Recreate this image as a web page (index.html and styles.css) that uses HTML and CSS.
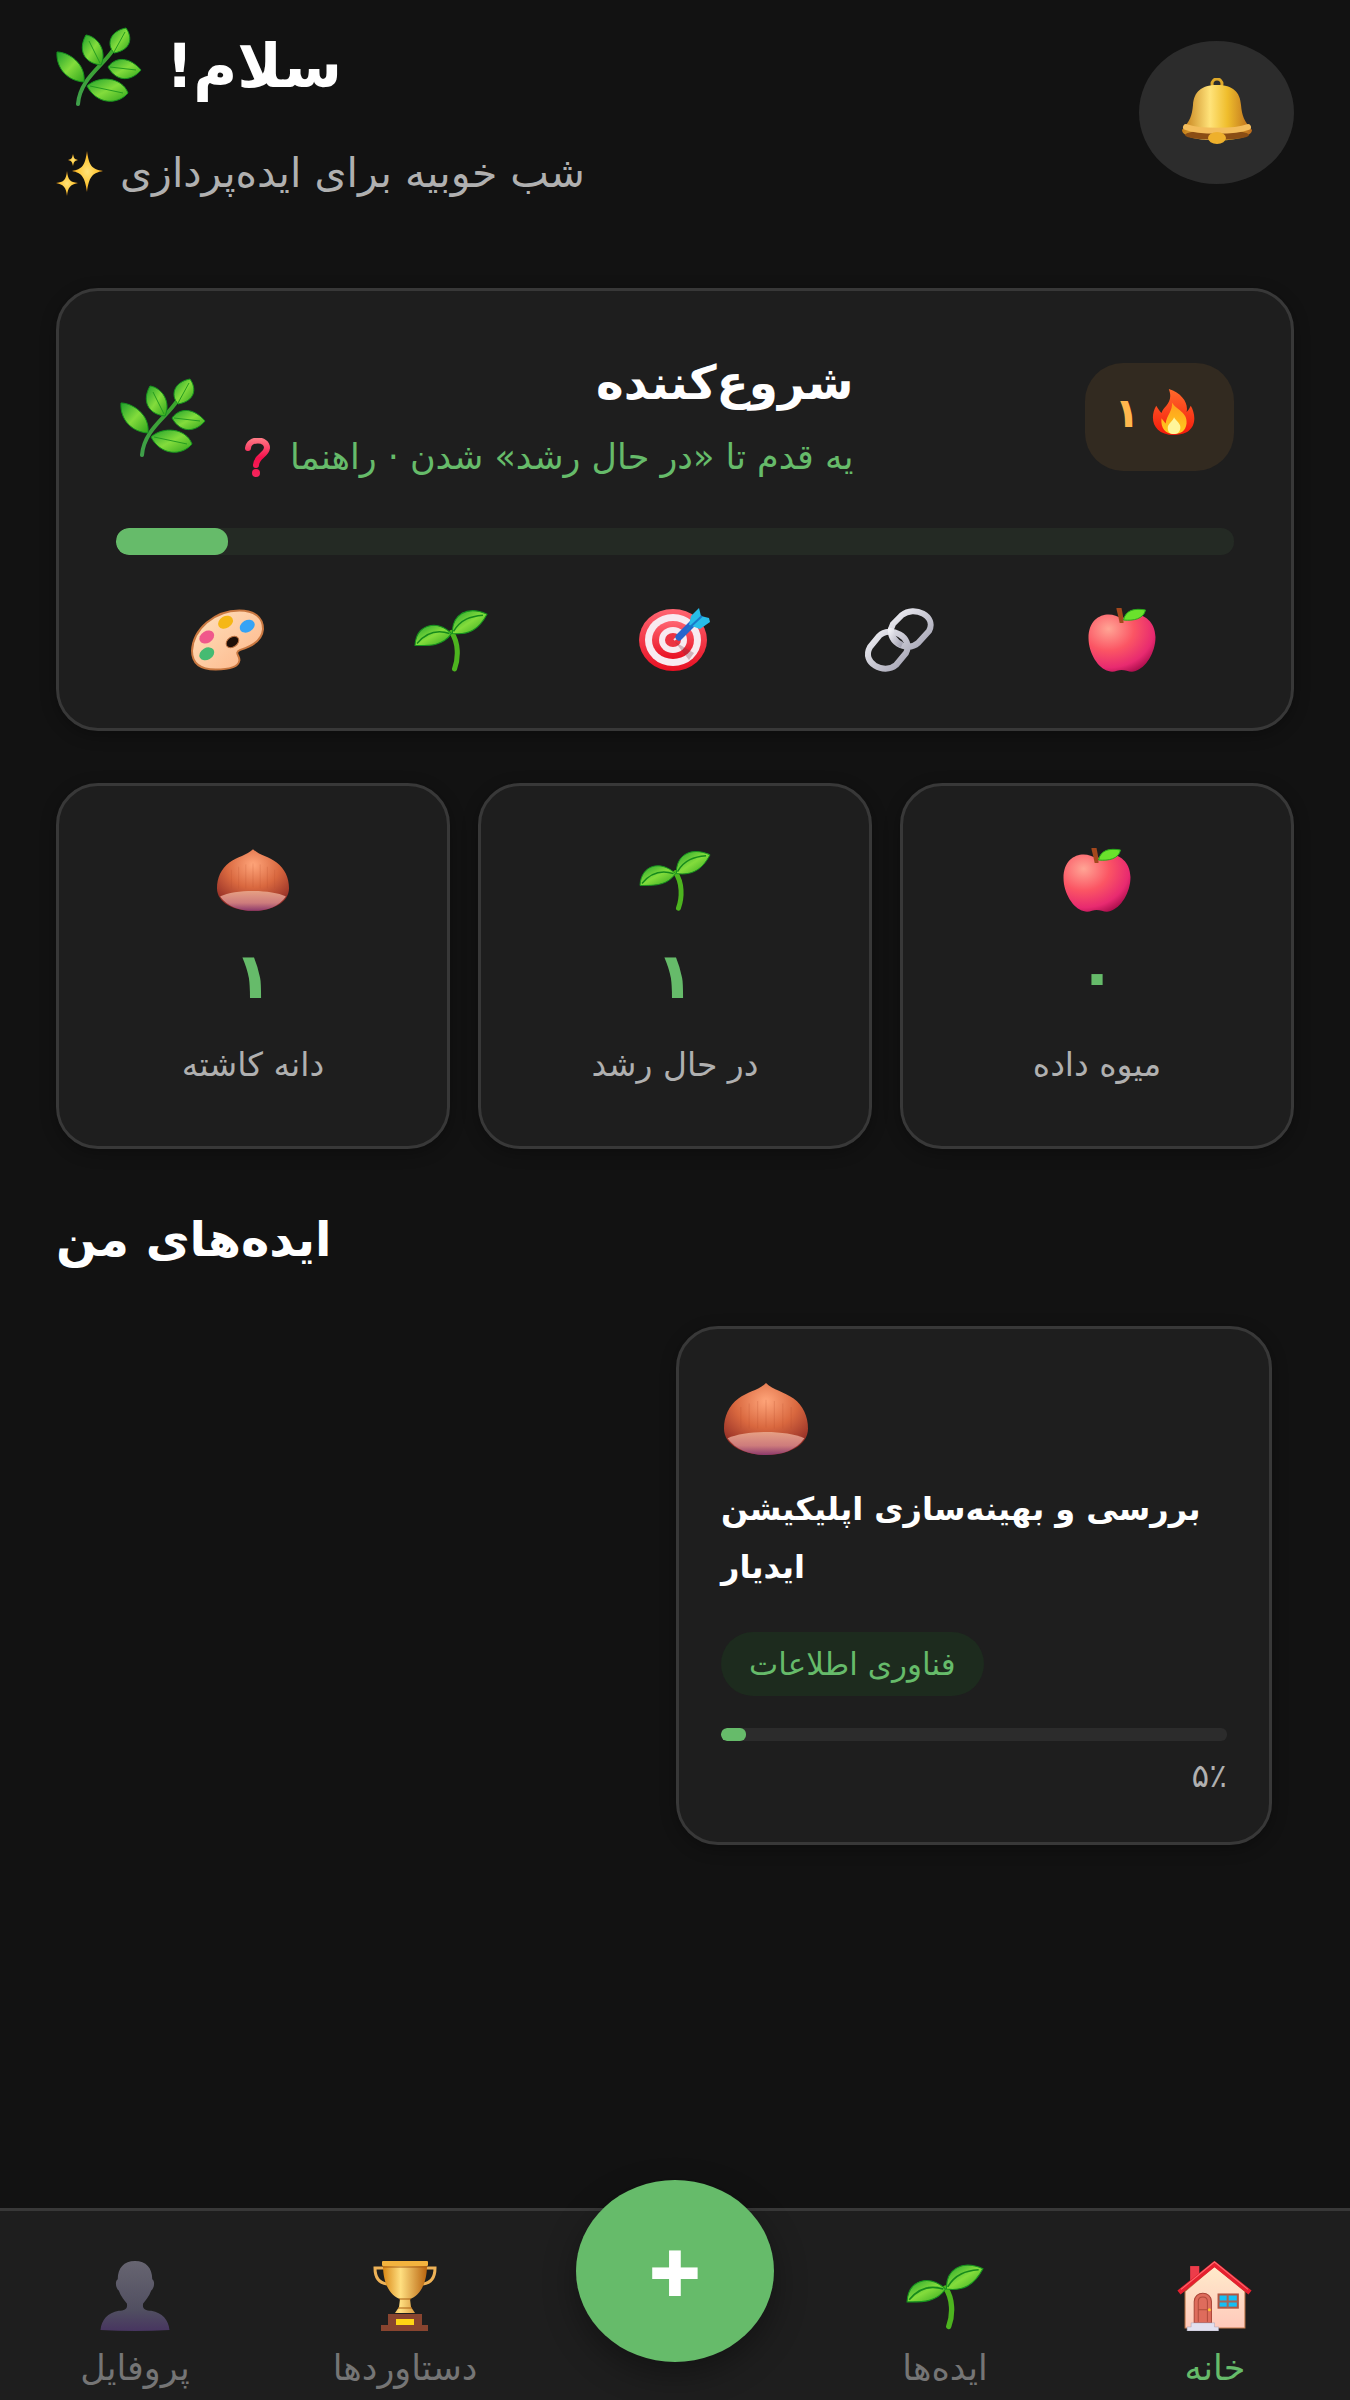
FILE: index.html
```
<!DOCTYPE html>
<html lang="fa">
<head>
  <meta charset="UTF-8" />
  <meta name="viewport" content="width=device-width, initial-scale=1.0"/>
  <title>ایدیار</title>
  <link rel="stylesheet" href="styles.css">
</head>
<body>
  <!-- shared icons -->
  <svg class="sprite" aria-hidden="true">
    <defs>
      <linearGradient id="leaf" x1="0" y1="0" x2="1" y2="1">
        <stop offset="0" stop-color="#1fa02c"/><stop offset=".5" stop-color="#83dc3c"/><stop offset="1" stop-color="#2fa51c"/>
      </linearGradient>
      <linearGradient id="stem" x1="0" y1="0" x2="0" y2="1">
        <stop offset="0" stop-color="#3aa52b"/><stop offset="1" stop-color="#3f9f4a"/>
      </linearGradient>
      <radialGradient id="apple" cx=".3" cy=".25" r=".85">
        <stop offset="0" stop-color="#ffa595"/><stop offset=".45" stop-color="#fb5564"/><stop offset=".8" stop-color="#e82a70"/><stop offset="1" stop-color="#a80c4b"/>
      </radialGradient>
      <radialGradient id="nut" cx=".5" cy=".25" r=".75">
        <stop offset="0" stop-color="#ffa57a"/><stop offset=".5" stop-color="#d9683f"/><stop offset="1" stop-color="#8e2924"/>
      </radialGradient>
      <linearGradient id="nut-base" x1="0" y1="0" x2="0" y2="1">
        <stop offset="0" stop-color="#e6a084"/><stop offset=".6" stop-color="#cd7b7c"/><stop offset="1" stop-color="#8c3a6c"/>
      </linearGradient>
      <linearGradient id="gold" x1="0" y1="0" x2="1" y2="0">
        <stop offset="0" stop-color="#c27a14"/><stop offset=".4" stop-color="#ffe37a"/><stop offset=".65" stop-color="#efbd2c"/><stop offset="1" stop-color="#b8681c"/>
      </linearGradient>
      <linearGradient id="cup" x1="0" y1="0" x2="1" y2="0">
        <stop offset="0" stop-color="#d98715"/><stop offset=".4" stop-color="#ffdf80"/><stop offset="1" stop-color="#b9640f"/>
      </linearGradient>
      <radialGradient id="spark">
        <stop offset="0" stop-color="#ffe27a"/><stop offset=".6" stop-color="#ffc93a"/><stop offset="1" stop-color="#f29a12"/>
      </radialGradient>
      <linearGradient id="flame" x1="0" y1="0" x2="0" y2="1">
        <stop offset="0" stop-color="#ff6a2b"/><stop offset="1" stop-color="#f5190c"/>
      </linearGradient>
      <linearGradient id="flame-in" x1="0" y1="0" x2="0" y2="1">
        <stop offset="0" stop-color="#ff9d1c"/><stop offset="1" stop-color="#ffcb1f"/>
      </linearGradient>
      <linearGradient id="pink" gradientUnits="userSpaceOnUse" x1="0" y1="0" x2="0" y2="39">
        <stop offset="0" stop-color="#ff7c86"/><stop offset=".5" stop-color="#f5114d"/><stop offset="1" stop-color="#f5255c"/>
      </linearGradient>
      <linearGradient id="board" x1="0" y1="0" x2="1" y2="1">
        <stop offset="0" stop-color="#ffe3bf"/><stop offset="1" stop-color="#fdb487"/>
      </linearGradient>
      <linearGradient id="ring" x1="0" y1="0" x2="0" y2="1">
        <stop offset="0" stop-color="#ff6571"/><stop offset="1" stop-color="#e80f22"/>
      </linearGradient>
      <linearGradient id="steel" x1="0" y1="0" x2="1" y2="1">
        <stop offset="0" stop-color="#f1f1f6"/><stop offset="1" stop-color="#a3a2b2"/>
      </linearGradient>
      <linearGradient id="person" x1="0" y1="0" x2="0" y2="1">
        <stop offset="0" stop-color="#676571"/><stop offset=".7" stop-color="#514f61"/><stop offset="1" stop-color="#473560"/>
      </linearGradient>
      <linearGradient id="wall" x1="0" y1="0" x2="0" y2="1">
        <stop offset="0" stop-color="#ffebcb"/><stop offset="1" stop-color="#ffc9bb"/>
      </linearGradient>
    </defs>

    <symbol id="i-herb" viewBox="0 0 86 79">
      <path d="M22 77C24 52 46 40 57 23" fill="none" stroke="url(#stem)" stroke-width="4" stroke-linecap="round"/>
      <g fill="url(#leaf)" stroke="#16931f" stroke-width="1">
        <path d="M1 25C12 25 30 36 28 55C12 54 0 42 1 25Z"/>
        <path d="M30 8C43 10 51 25 45 38C27 36 22 22 30 8Z"/>
        <path d="M70 1C77 11 75 23 58 26C50 17 54 4 70 1Z"/>
        <path d="M52 40C60 29 74 30 85 43C76 54 61 56 52 40Z"/>
        <path d="M31 59C43 48 66 50 72 66C62 78 41 78 31 59Z"/>
      </g>
      <path d="M33 14L44 36M69 5L58 25M54 40L80 43M34 59L67 66" fill="none" stroke="#259c20" stroke-width="1"/>
    </symbol>
    <symbol id="i-sprout" viewBox="0 0 73 61">
      <path d="M37 23C44 33 44 48 40 59" fill="none" stroke="#4db41f" stroke-width="5" stroke-linecap="round"/>
      <g fill="url(#leaf)" stroke="#16931f" stroke-width="1">
        <path d="M38 24C37 6 52-4 72 5C64 20 54 26 38 24Z"/>
        <path d="M1 36C2 15 22 10 37 24C28 37 14 36 1 36Z"/>
      </g>
      <path d="M39 22C46 10 56 7 68 6M3 34C12 23 22 20 35 24" fill="none" stroke="#168a1c" stroke-width="1.5"/>
    </symbol>
    <symbol id="i-apple" viewBox="0 0 67 64">
      <path d="M33 11C22 2 0 6 0 30C0 45 10 61 20 63C25 65 29 62 33 62C38 62 42 65 47 63C57 60 67 45 67 29C66 6 44 2 33 11Z" fill="url(#apple)"/>
      <path d="M29 1L32 0C33 5 34 9 34 14L32 14C31 9 30 5 29 1Z" fill="#a4481d" stroke="#a4481d" stroke-width="2"/>
      <path d="M35 12C37 2 46 0 57 2C55 11 45 13 35 12Z" fill="#6ae22c" stroke="#28a81b" stroke-width="1"/>
    </symbol>
    <symbol id="i-nut" viewBox="0 0 70 60">
      <path d="M35 0C41 6 50 7 58 13C66 19 70 28 70 38C70 52 54 60 35 60C16 60 0 52 0 38C0 28 4 19 12 13C20 7 29 6 35 0Z" fill="url(#nut)"/>
      <path d="M14 20V38M21 17V38M28 15V38M35 14V37M42 15V38M49 17V38M56 20V38" stroke="#b84c2c" stroke-width="1" opacity=".2"/>
      <path d="M3 46C18 39 52 39 67 46C60 56 48 60 35 60C22 60 10 56 3 46Z" fill="url(#nut-base)"/>
    </symbol>
    <symbol id="i-palette" viewBox="0 0 75 62">
      <path d="M49 1C64 1 73 8 73 20C72 32 60 38 50 41C43 44 50 47 49 52C48 59 36 61 25 61C9 61 1 54 1 42C2 20 24 1 49 1Z" fill="url(#board)" stroke="#c97841" stroke-width="2"/>
      <ellipse cx="42" cy="33" rx="7" ry="5" transform="rotate(-35 42 33)" fill="#1e0f08" stroke="#b96f40"/>
      <ellipse cx="35" cy="13" rx="8" ry="6" transform="rotate(-30 35 13)" fill="#f5b716"/>
      <ellipse cx="57" cy="17" rx="8" ry="6" transform="rotate(-30 57 17)" fill="#36a3f5"/>
      <ellipse cx="16" cy="28" rx="8" ry="6" transform="rotate(-30 16 28)" fill="#f0588b"/>
      <ellipse cx="16" cy="45" rx="8" ry="6" transform="rotate(-30 16 45)" fill="#45bb72"/>
    </symbol>
    <symbol id="i-target" viewBox="0 0 72 64">
      <ellipse cx="34" cy="32" rx="34" ry="31" fill="url(#ring)"/>
      <ellipse cx="34" cy="32" rx="28" ry="26" fill="#f8eaf0"/>
      <ellipse cx="34" cy="32" rx="21" ry="19" fill="url(#ring)"/>
      <ellipse cx="34" cy="32" rx="14" ry="13" fill="#f8eaf0"/>
      <ellipse cx="34" cy="32" rx="8" ry="7" fill="#ec3342"/>
      <path d="M36 34L55 45L50 52Z" fill="#77333f" opacity=".3"/>
      <path d="M35 32L40 28" stroke="#e8e8f0" stroke-width="2"/>
      <path d="M40 29L54 15" stroke="#2765cd" stroke-width="7" stroke-linecap="round"/>
      <path d="M50 17L52 8L60 0L62 8L70 10L71 14L61 21Z" fill="#27bce8"/>
      <path d="M48 22L63 8" stroke="#1979c9" stroke-width="2"/>
    </symbol>
    <symbol id="i-link" viewBox="0 0 70 64">
      <g fill="none" stroke="url(#steel)" stroke-width="6">
        <path d="M29 16L38 7C50-3 73 8 65 23L54 35C43 45 20 33 29 16Z"/>
        <path d="M6 39L15 28C26 17 50 29 42 45L32 57C20 67-3 55 6 39Z"/>
        <path d="M27 20C26 27 31 34 38 37"/>
      </g>
    </symbol>
    <symbol id="i-fire" viewBox="0 0 41 44">
      <path d="M16 0C29 4 35 14 33 22C35 20 36 18 37 16C43 26 43 44 21 44C1 44-3 28 4 16C6 19 7 21 9 23C11 16 21 13 16 0Z" fill="url(#flame)"/>
      <path d="M19 13C23 20 34 22 33 33C32 40 28 43 21 43C13 43 8 38 9 28L13 33C14 25 20 21 19 13Z" fill="url(#flame-in)"/>
      <path d="M21 27C23 31 28 33 27 38C26 42 24 43 21 43C17 43 15 41 15 37C15 33 20 31 21 27Z" fill="#fff59b"/>
    </symbol>
    <symbol id="i-help" viewBox="0 0 26 39">
      <path d="M4 10C5 0 23 0 23 10C22 18 13 17 12 27" fill="none" stroke="url(#pink)" stroke-width="6" stroke-linecap="round"/>
      <ellipse cx="12" cy="35" rx="4" ry="4" fill="url(#pink)"/>
    </symbol>
    <symbol id="i-bell" viewBox="0 0 72 66">
      <circle cx="36" cy="6" r="5" fill="none" stroke="#dfa92a" stroke-width="3"/>
      <path d="M36 7C20 7 13 14 12 27C11 38 9 43 1 52C1 66 71 66 71 52C63 43 61 38 60 27C59 14 52 7 36 7Z" fill="url(#gold)"/>
      <ellipse cx="36" cy="57" rx="32" ry="5" fill="#8a4d14"/>
      <path d="M5 49C18 54 54 54 67 49" fill="none" stroke="#f3bd5c" stroke-width="6" stroke-linecap="round"/>
      <ellipse cx="36" cy="60" rx="9" ry="6" fill="#eeb02c"/>
    </symbol>
    <symbol id="i-sparkles" viewBox="0 0 48 45">
      <g fill="url(#spark)">
        <path d="M31 0C33 15 36 18 47 20C36 22 33 26 31 41C29 26 26 22 16 20C26 18 29 15 31 0Z"/>
        <path d="M11 20C12 29 14 31 22 32C14 34 12 36 11 45C10 36 8 34 0 32C8 31 10 29 11 20Z"/>
        <path d="M17 3C18 7 18 8 22 9C18 10 18 11 17 15C16 11 16 10 12 9C16 8 16 7 17 3Z"/>
      </g>
    </symbol>
    <symbol id="i-person" viewBox="0 0 68 69">
      <path d="M34 0C45 0 51 7 51 18C54 20 53 27 50 29C48 35 44 39 42 42C41 47 44 49 50 49C61 51 67 58 68 68Q34 70 0 68C1 58 7 51 18 49C24 49 27 47 26 42C24 39 20 35 18 29C15 27 14 20 17 18C17 7 23 0 34 0Z" fill="url(#person)"/>
    </symbol>
    <symbol id="i-trophy" viewBox="0 0 64 70">
      <path d="M12 7H2C2 16 6 22 14 23M52 7H62C62 16 58 22 50 23" fill="none" stroke="#eeb257" stroke-width="3"/>
      <path d="M10 4H54C54 24 46 35 37 38L38 46L42 52H22L26 46L27 38C18 35 10 24 10 4Z" fill="url(#cup)"/>
      <rect x="9" y="0" width="46" height="5" rx="1" fill="#f3b33e"/>
      <path d="M10 6H54M26 38H38M25 47H39" stroke="#a95f12" stroke-width="1"/>
      <path d="M15 53H49V64H55V70H8V64H15Z" fill="#88442f"/>
      <rect x="23" y="58" width="18" height="6" fill="#ffd515"/>
    </symbol>
    <symbol id="i-house" viewBox="0 0 75 69">
      <rect x="13" y="5" width="9" height="18" fill="#ed3c4a"/>
      <path d="M8 30L37 5L67 30V66H8Z" fill="url(#wall)" stroke="#c77b4d" stroke-width="1"/>
      <path d="M2 31L37 3L72 31" fill="none" stroke="#e5202f" stroke-width="5"/>
      <path d="M4 28L37 1L70 28" fill="none" stroke="#ff6a70" stroke-width="1"/>
      <path d="M17 61V40C17 29 34 29 34 40V61Z" fill="#de6c5c" stroke="#ab4537" stroke-width="1"/>
      <path d="M21 60V40C21 34 30 34 30 40V60M21 48H30" fill="none" stroke="#b04b3c" stroke-width="1"/>
      <circle cx="32" cy="48" r="1.5" fill="#ffc931"/>
      <path d="M14 61H37V65H41V69H10V65H14Z" fill="#e2e0ef" stroke="#a7a4ba" stroke-width=".5"/>
      <rect x="41" y="33" width="19" height="13" fill="#14bff4" stroke="#b25541" stroke-width="2"/>
      <path d="M50 33V46M41 40H60" stroke="#a3675b" stroke-width="2"/>
    </symbol>
  </svg>

  <main class="app">
    <header class="header">
      <div class="greeting">
        <h1 dir="rtl">سلام! <svg class="icon-herb"><use href="#i-herb"/></svg></h1>
        <p dir="rtl">شب خوبیه برای ایده‌پردازی <svg class="icon-sparkles"><use href="#i-sparkles"/></svg></p>
      </div>
      <button class="bell-btn" aria-label="اعلان‌ها"><svg><use href="#i-bell"/></svg></button>
    </header>

    <section class="card level-card">
      <div class="level-row">
        <svg class="icon-herb"><use href="#i-herb"/></svg>
        <div class="level-info" dir="rtl">
          <h2>شروع‌کننده</h2>
          <p>یه قدم تا «در حال رشد» شدن · راهنما <svg class="icon-help"><use href="#i-help"/></svg></p>
        </div>
        <div class="streak"><span>۱</span><svg><use href="#i-fire"/></svg></div>
      </div>
      <div class="progress level-progress"><div class="progress-fill" style="width: 10%"></div></div>
      <div class="badges">
        <svg><use href="#i-palette"/></svg>
        <svg><use href="#i-sprout"/></svg>
        <svg><use href="#i-target"/></svg>
        <svg><use href="#i-link"/></svg>
        <svg><use href="#i-apple"/></svg>
      </div>
    </section>

    <section class="stats">
      <div class="card stat">
        <svg><use href="#i-nut"/></svg>
        <strong>۱</strong>
        <span>دانه کاشته</span>
      </div>
      <div class="card stat">
        <svg><use href="#i-sprout"/></svg>
        <strong>۱</strong>
        <span>در حال رشد</span>
      </div>
      <div class="card stat">
        <svg><use href="#i-apple"/></svg>
        <strong>۰</strong>
        <span>میوه داده</span>
      </div>
    </section>

    <h2 class="section-title">ایده‌های من</h2>
    <section class="ideas" dir="rtl">
      <article class="card idea">
        <svg><use href="#i-nut"/></svg>
        <h3>بررسی و بهینه‌سازی اپلیکیشن ایدیار</h3>
        <span class="tag">فناوری اطلاعات</span>
        <div class="progress idea-progress"><div class="progress-fill" style="width: 5%"></div></div>
        <p class="percent">۵٪</p>
      </article>
    </section>
  </main>

  <nav class="bottom-nav">
    <a href="#profile"><svg><use href="#i-person"/></svg><span>پروفایل</span></a>
    <a href="#achievements"><svg><use href="#i-trophy"/></svg><span>دستاوردها</span></a>
    <button class="add-btn" aria-label="ایده جدید">+</button>
    <a href="#ideas"><svg><use href="#i-sprout"/></svg><span>ایده‌ها</span></a>
    <a href="#home" class="active"><svg><use href="#i-house"/></svg><span>خانه</span></a>
  </nav>
</body>
</html>
```
FILE: styles.css
```
* {
  box-sizing: border-box;
  margin: 0;
  padding: 0;
  font-family: "DejaVu Sans", sans-serif;
}

body {
  min-height: 100vh;
  display: flex;
  flex-direction: column;
  background: #121212;
  color: #fff;
}

.sprite {
  position: absolute;
  width: 0;
  height: 0;
}

.app {
  flex: 1;
  padding: 24px 56px 56px;
}

.card {
  background: #1e1e1e;
  border: 3px solid #383838;
  border-radius: 42px;
  box-shadow: 0 4px 16px rgba(0, 0, 0, 0.3);
}

.icon-herb {
  width: 86px;
  height: 79px;
}

.icon-sparkles {
  width: 48px;
  height: 45px;
}

.icon-help {
  width: 26px;
  height: 39px;
}

/* header */
.header {
  display: flex;
  justify-content: space-between;
  align-items: center;
  margin-bottom: 87px;
}

.greeting h1,
.greeting p {
  display: flex;
  align-items: center;
  justify-content: flex-end;
}

.greeting h1 {
  gap: 24px;
  font-size: 60px;
  line-height: 84px;
  margin-bottom: 37px;
}

.greeting p {
  gap: 16px;
  font-size: 41px;
  line-height: 56px;
  color: #b0b0b0;
}

.bell-btn {
  width: 155px;
  height: 143px;
  border: none;
  border-radius: 50%;
  background: #2c2c2c;
  cursor: pointer;
}

.bell-btn svg {
  width: 72px;
  height: 66px;
}

/* level card */
.level-card {
  padding: 56px 57px;
}

.level-row {
  display: flex;
  align-items: center;
  padding-left: 4px;
}

.level-info {
  margin-left: 38px;
}

.level-info h2 {
  font-size: 47px;
  line-height: 72px;
  margin-bottom: 8px;
}

.level-info p {
  display: flex;
  align-items: center;
  gap: 20px;
  font-size: 35px;
  line-height: 60px;
  color: #66bb6a;
}

.streak {
  display: flex;
  justify-content: center;
  gap: 12px;
  width: 149px;
  height: 108px;
  margin-left: auto;
  padding: 26px 10px 0 0;
  border-radius: 38px;
  background: #322a20;
  color: #ffb74d;
  font-size: 41px;
  font-weight: bold;
  line-height: 48px;
}

.streak svg {
  width: 43px;
  height: 46px;
}

.progress {
  overflow: hidden;
}

.progress-fill {
  height: 100%;
  background: #66bb6a;
  border-radius: inherit;
}

.level-progress {
  height: 27px;
  margin-top: 41px;
  border-radius: 13px;
  background: #242a24;
}

.badges {
  display: grid;
  grid-template-columns: repeat(5, 1fr);
  justify-items: center;
  margin-top: 53px;
}

.badges svg {
  width: 74px;
  height: 64px;
}

/* stats */
.stats {
  display: grid;
  grid-template-columns: repeat(3, 1fr);
  gap: 28px;
  margin-top: 52px;
}

.stat {
  display: flex;
  flex-direction: column;
  align-items: center;
  padding: 62px 20px 57px;
}

.stat svg {
  width: 72px;
  height: 64px;
}

.stat strong {
  margin: 28px 0 29px;
  font-size: 64px;
  line-height: 72px;
  color: #66bb6a;
}

.stat span {
  font-size: 33px;
  line-height: 48px;
  color: #b0b0b0;
}

/* ideas */
.section-title {
  margin: 54px 0 51px;
  font-size: 48px;
  line-height: 72px;
}

.ideas {
  display: grid;
  grid-template-columns: 1fr 1fr;
  gap: 24px;
  margin-right: 22px;
}

.idea {
  padding: 54px 42px 46px;
  text-align: left;
}

.idea svg {
  display: block;
  width: 90px;
  height: 72px;
  margin-right: auto;
}

.idea h3 {
  margin: 25px 0 36px;
  font-size: 32px;
  line-height: 58px;
}

.tag {
  display: block;
  width: fit-content;
  margin-right: auto;
  padding: 0 28px;
  border-radius: 32px;
  background: #1d2b1e;
  color: #66bb6a;
  font-size: 31px;
  line-height: 64px;
}

.idea-progress {
  direction: ltr;
  height: 13px;
  margin: 32px 0 15px;
  border-radius: 6px;
  background: #2c2c2c;
}

.percent {
  font-size: 33px;
  line-height: 40px;
  text-align: right;
  color: #b0b0b0;
}

/* bottom nav */
.bottom-nav {
  display: grid;
  grid-template-columns: repeat(5, 1fr);
  justify-items: center;
  height: 192px;
  background: #1e1e1e;
  border-top: 3px solid #383838;
}

.bottom-nav a {
  display: flex;
  flex-direction: column;
  align-items: center;
  padding-top: 50px;
  color: #757575;
  font-size: 35px;
  line-height: 44px;
  text-decoration: none;
}

.bottom-nav svg {
  width: 78px;
  height: 70px;
  margin-bottom: 15px;
}

.bottom-nav .active {
  color: #66bb6a;
}

.add-btn {
  width: 198px;
  height: 182px;
  margin-top: -31px;
  border: none;
  border-radius: 50%;
  background: #66bb6a;
  box-shadow: 0 12px 32px rgba(0, 0, 0, 0.35);
  color: #fff;
  font-size: 66px;
  font-weight: bold;
  -webkit-text-stroke: 4px #fff;
  cursor: pointer;
}
```
